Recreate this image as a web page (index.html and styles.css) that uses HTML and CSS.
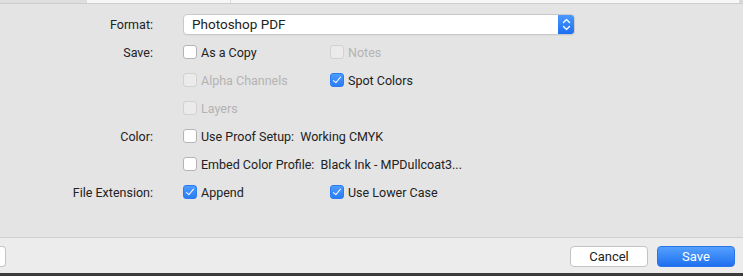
FILE: index.html
```html
<!DOCTYPE html>
<html lang="en">
<head>
    <meta charset="UTF-8">
    <title>Save As</title>
    <link rel="stylesheet" href="styles.css">
</head>
<body>
    <div class="dialog">
        <div class="list-edge">
            <span class="seg seg-a"></span>
            <span class="seg seg-b"></span>
            <span class="seg seg-c"></span>
        </div>

        <div class="options">
            <div class="label">Format:</div>
            <div class="popup">
                <span class="popup-text">Photoshop PDF</span>
                <span class="stepper">
                    <svg width="9" height="13" viewBox="0 0 9 13">
                        <path d="M1.5 4.5 L4.5 1.5 L7.5 4.5 M1.5 8.5 L4.5 11.5 L7.5 8.5" fill="none" stroke="#fff" stroke-width="1.3" stroke-linecap="round" stroke-linejoin="round"/>
                    </svg>
                </span>
            </div>

            <div class="label">Save:</div>
            <div class="row">
                <label class="check"><span class="box"></span>As a Copy</label>
                <label class="check disabled"><span class="box"></span>Notes</label>
            </div>

            <div class="label"></div>
            <div class="row">
                <label class="check disabled"><span class="box"></span>Alpha Channels</label>
                <label class="check"><span class="box on"></span>Spot Colors</label>
            </div>

            <div class="label"></div>
            <div class="row">
                <label class="check disabled"><span class="box"></span>Layers</label>
            </div>

            <div class="label">Color:</div>
            <div class="row">
                <label class="check"><span class="box"></span>Use Proof Setup:&nbsp; Working CMYK</label>
            </div>

            <div class="label"></div>
            <div class="row">
                <label class="check"><span class="box"></span>Embed Color Profile:&nbsp; Black Ink - MPDullcoat3...</label>
            </div>

            <div class="label">File Extension:</div>
            <div class="row">
                <label class="check"><span class="box on"></span>Append</label>
                <label class="check"><span class="box on"></span>Use Lower Case</label>
            </div>
        </div>

        <div class="footer">
            <span class="stub"></span>
            <div class="actions">
                <button class="btn">Cancel</button>
                <button class="btn primary">Save</button>
            </div>
        </div>
        <div class="window-edge"></div>
    </div>
</body>
</html>
```

FILE: styles.css
```css
* {
    box-sizing: border-box;
}
body {
    margin: 0;
    background-color: #e4e4e4;
    font-family: Roboto, "Noto Sans", Arial, sans-serif;
    font-size: 12.5px;
    color: #222;
}
.dialog {
    width: 743px;
    height: 276px;
    display: flex;
    flex-direction: column;
    overflow: hidden;
}
.list-edge {
    height: 4px;
    display: flex;
    background-color: #d9d9d9;
    border-bottom: 1px solid #cdcdcd;
}
.seg {
    height: 3px;
    background-color: #f7f7f7;
    border-right: 1px solid #dcdcdc;
}
.seg-a {
    width: 87px;
    background-color: #dedede;
}
.seg-b {
    width: 144px;
}
.seg-c {
    flex: 1;
    margin-right: 3px;
}
.options {
    display: grid;
    grid-template-columns: 153px 392px;
    grid-auto-rows: 28px;
    column-gap: 30px;
    padding-top: 6px;
    align-items: center;
}
.label {
    text-align: right;
}
.popup {
    height: 21px;
    background-color: #fff;
    border: 1px solid #c9c9c9;
    border-radius: 4px;
    display: flex;
    align-items: center;
    justify-content: space-between;
    overflow: hidden;
    box-shadow: 0 1px 0 rgba(0, 0, 0, 0.04);
}
.popup-text {
    padding-left: 8px;
    font-size: 13.5px;
}
.stepper {
    width: 17px;
    height: 21px;
    margin: -1px -1px -1px 0;
    background: linear-gradient(#4b9bff, #1a6cf2);
    border-radius: 0 4px 4px 0;
    display: flex;
    align-items: center;
    justify-content: center;
}
.row {
    display: flex;
    align-items: center;
}
.check {
    display: flex;
    align-items: center;
    width: 147px;
    white-space: nowrap;
}
.box {
    width: 14px;
    height: 14px;
    border: 1px solid #b4b4b4;
    border-radius: 3px;
    background-color: #fff;
    margin-right: 4px;
    flex-shrink: 0;
    position: relative;
}
.box.on {
    background: linear-gradient(#4d9cff, #2a7cf4);
    border-color: #2a7cf4;
}
.box.on::after {
    content: "";
    position: absolute;
    left: 4px;
    top: 1px;
    width: 3px;
    height: 7px;
    border: solid #fff;
    border-width: 0 1.6px 1.6px 0;
    transform: rotate(40deg);
}
.disabled {
    color: #b3b3b3;
}
.disabled .box {
    background-color: #ebebeb;
    border-color: #d2d2d2;
}
.footer {
    margin-top: auto;
    height: 36px;
    background-color: #ececec;
    border-top: 1px solid #cfcfcf;
    display: flex;
    align-items: center;
    justify-content: space-between;
}
.stub {
    width: 6px;
    height: 21px;
    margin-top: 2px;
    background-color: #fff;
    border: 1px solid #c5c5c5;
    border-left: none;
    border-radius: 0 4px 4px 0;
}
.actions {
    display: flex;
    gap: 9px;
    padding-right: 8px;
    margin-top: 2px;
}
.btn {
    width: 78px;
    height: 21px;
    font-family: inherit;
    font-size: 13px;
    color: #222;
    background-color: #fff;
    border: 1px solid #c3c3c3;
    border-radius: 4px;
    padding: 0;
}
.btn.primary {
    color: #fff;
    background: linear-gradient(#54a0ff, #1f70f0);
    border-color: #2a74ea;
}
.window-edge {
    height: 3px;
    background-color: #3b3b3b;
}
```
